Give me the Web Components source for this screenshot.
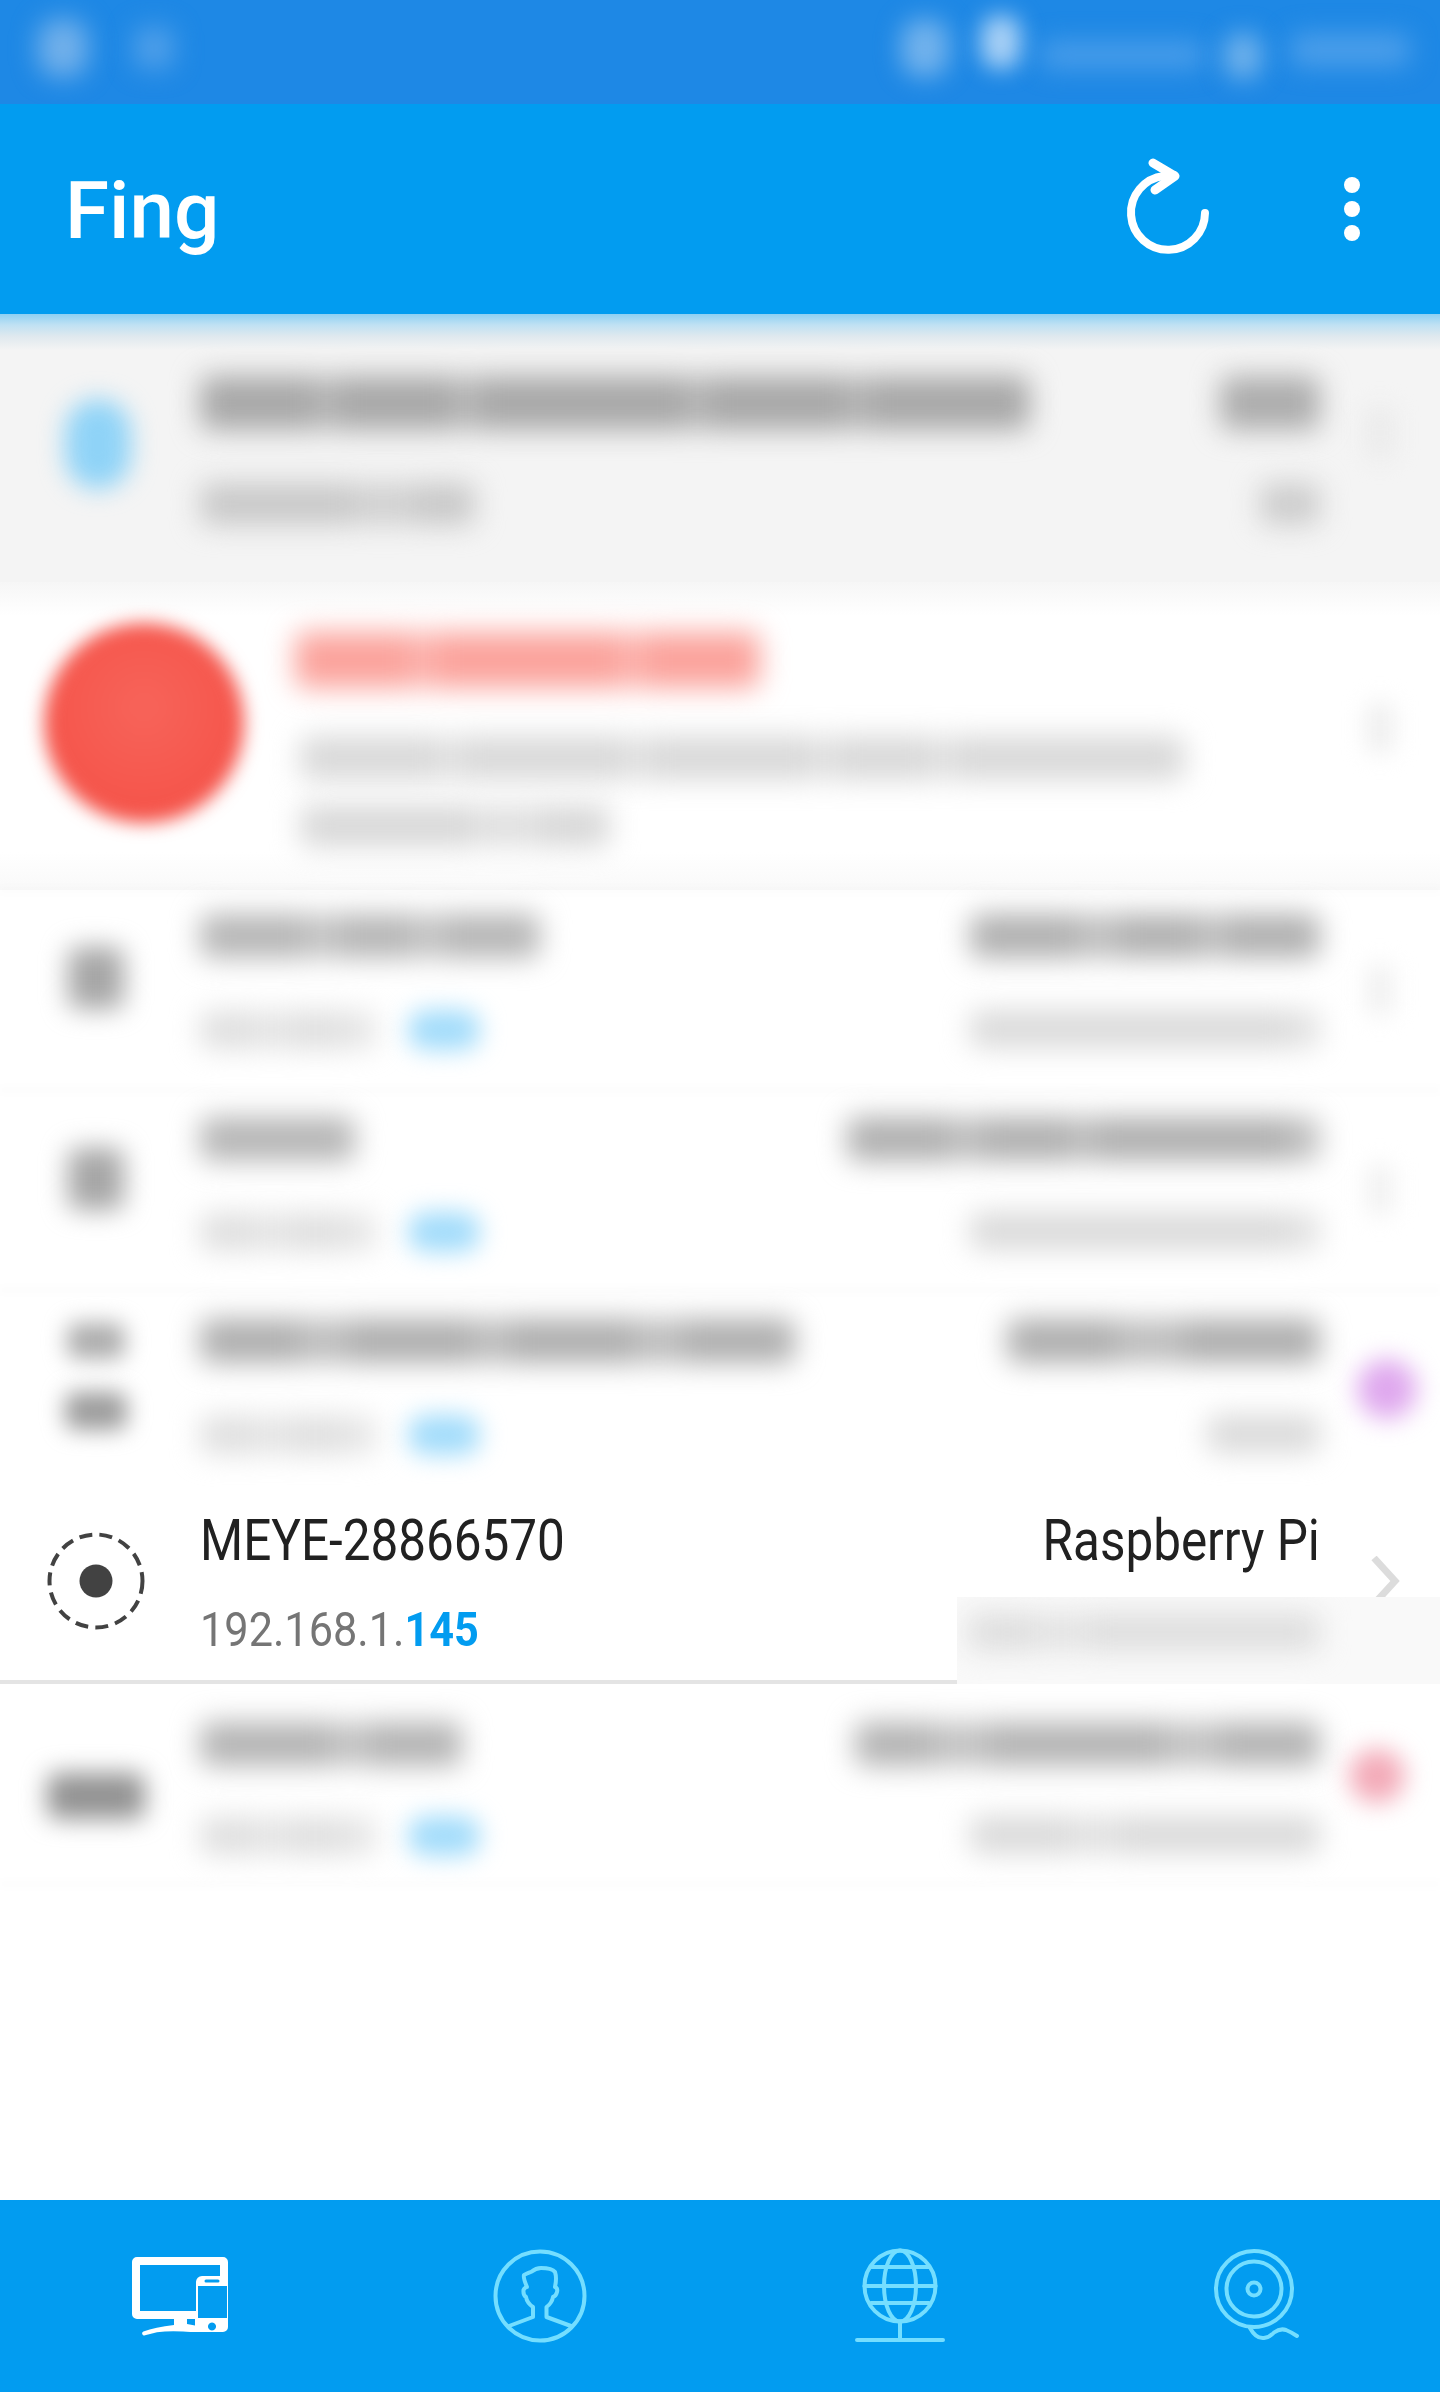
<!DOCTYPE html>
<html><head><meta charset="utf-8"><title>Fing</title>
<style>
html,body{margin:0;padding:0;background:#fff}
body{width:1440px;height:2392px;overflow:hidden;font-family:Roboto,"Liberation Sans",sans-serif}
fing-app{display:flex}
</style></head><body>
<fing-app></fing-app>
<script>
class BlurBar extends HTMLElement{
  connectedCallback(){
    const a=(n,d)=>this.getAttribute(n)??d;
    const segs=a('segs','100').split(',').map(Number);
    const c=a('c','#ccc'),h=a('h','40'),b=a('b','14');
    const s=this.attachShadow({mode:'open'});
    s.innerHTML=`<style>:host{display:block;width:${a('w','100')}px;height:${h}px}
      .w{display:flex;width:100%;height:100%;overflow:hidden;filter:blur(${b}px);border-radius:${a('r','10')}px}
      i{display:block;height:100%;background:${c}}</style>
      <div class="w">${segs.map(v=>`<i style="flex:${Math.abs(v)} 0 0;${v<0?'opacity:.8':''}"></i>`).join('')}</div>`;
  }
}
customElements.define('blur-bar',BlurBar);

class StatusBar extends HTMLElement{
  constructor(){super();this.attachShadow({mode:'open'}).innerHTML=`<style>
    :host{display:flex;height:104px;background:#1e88e5;align-items:center;box-sizing:border-box;padding:0 30px 8px 38px;overflow:hidden;flex:none}
    .a{display:flex;align-items:center;gap:46px}.sp{flex:1}
    .b{display:flex;align-items:center}
  </style>
  <div class="a"><blur-bar w="50" h="58" c="#72b0ea" b="13" r="20"></blur-bar><blur-bar w="40" h="42" c="#4f9fe9" b="13"></blur-bar></div>
  <div class="sp"></div>
  <div class="b" style="margin-right:0">
    <blur-bar w="48" h="58" c="#72b2ec" b="12" r="20" style="margin-right:-14px;margin-left:-14px"></blur-bar>
    <blur-bar w="40" h="54" c="#a8d0f5" b="11" r="18" style="margin-left:46px;margin-top:-12px"></blur-bar>
    <blur-bar w="165" h="26" c="#4b9eea" b="13" style="margin-left:19px;margin-top:14px"></blur-bar>
    <blur-bar w="38" h="46" c="#6fb1eb" b="12" r="16" style="margin-left:19px;margin-top:16px"></blur-bar>
    <blur-bar w="120" h="32" c="#4d9fea" b="13" style="margin-left:28px;margin-top:4px"></blur-bar>
  </div>`;}
}
customElements.define('status-bar',StatusBar);

class TopBar extends HTMLElement{
  constructor(){super();this.attachShadow({mode:'open'}).innerHTML=`<style>
    :host{display:flex;height:210px;background:#029cf0;align-items:center;color:#fff;position:relative;z-index:1;flex:none}
    h1{margin:0 0 0 65px;font:500 80px/1 Roboto,sans-serif;flex:1;position:relative;top:2px}
    svg{display:block}
    .shadow{position:absolute;left:0;right:0;top:100%;height:36px;background:linear-gradient(#8ed0f3,#bfe1f3 30%,rgba(222,232,238,.95) 62%,rgba(244,244,244,0))}
  </style>
  <h1>Fing</h1>
  <svg width="100" height="100" viewBox="0 0 100 100" style="margin-right:130px;position:relative;top:-1px">
    <path d="M91 55 A37 37 0 1 1 50 18 L60 17" fill="none" stroke="#fff" stroke-width="8" stroke-linecap="round"/>
    <path d="M39 5 L61 18 L41 32" fill="none" stroke="#fff" stroke-width="9" stroke-linecap="round" stroke-linejoin="round"/>
  </svg>
  <svg width="16" height="64" viewBox="0 0 16 64" style="margin-right:80px;position:relative;top:0">
    <circle cx="8" cy="8" r="8" fill="#fff"/><circle cx="8" cy="32" r="8" fill="#fff"/><circle cx="8" cy="56" r="8" fill="#fff"/>
  </svg>
  <div class="shadow"></div>`;}
}
customElements.define('top-bar',TopBar);

class DeviceRow extends HTMLElement{
  connectedCallback(){
    const h=this.getAttribute('height'),top=this.getAttribute('top')||0,gap=this.getAttribute('gap')||0,bg=this.getAttribute('bg')||'transparent';
    this.attachShadow({mode:'open'}).innerHTML=`<style>
    :host{display:grid;grid-template-columns:200px 1fr 120px;height:${h}px;background:${bg};position:relative;flex:none;box-sizing:border-box}
    .ic{display:flex;align-items:center;justify-content:center;flex-direction:column;gap:${this.getAttribute('icgap')||30}px;padding-right:8px;padding-bottom:${this.getAttribute('icb')||0}px;padding-top:${this.getAttribute('ict')||0}px}
    .mid{display:grid;grid-template-columns:1fr auto;grid-template-rows:auto auto;align-content:start;row-gap:${gap}px;padding-top:${top}px}
    .e{display:flex;align-items:center;justify-content:center}
    ::slotted([slot=tr]),::slotted([slot=br]){justify-self:end}
    </style>
    <div class="ic"><slot name="icon"></slot></div>
    <div class="mid"><slot name="tl"></slot><slot name="tr"></slot><slot name="bl"></slot><slot name="br"></slot></div>
    <div class="e"><slot name="end"></slot></div>`;
  }
}
customElements.define('device-row',DeviceRow);

class IpLine extends HTMLElement{
  constructor(){super();this.attachShadow({mode:'open'}).innerHTML=`<style>
    :host{display:flex;gap:32px;align-items:center}
  </style><blur-bar w="176" h="38" c="#dfdfdf" segs="50,-30,50,-30"></blur-bar><blur-bar w="72" h="40" c="#a2dcfb" r="18" b="12"></blur-bar>`;}
}
customElements.define('ip-line',IpLine);

class AlertRow extends HTMLElement{
  constructor(){super();this.attachShadow({mode:'open'}).innerHTML=`<style>
    :host{display:grid;grid-template-columns:295px 1fr 120px;height:308px;flex:none;background:linear-gradient(#f6f6f6,#fff 34px,#fff 270px,#f9f9f9)}
    .c{display:flex;align-items:center;justify-content:center;padding-bottom:27px}
    .d{width:200px;height:200px;border-radius:50%;background:radial-gradient(circle at 50% 42%,#f7645a,#f5544a 70%);filter:blur(9px);margin-left:-8px}
    .t{display:flex;flex-direction:column;padding-top:50px}
    .e{display:flex;align-items:center;justify-content:center;padding-bottom:16px}
  </style>
  <div class="c"><div class="d"></div></div>
  <div class="t">
    <blur-bar w="465" h="56" c="#fba39c" segs="100,-20,100,60,-20,100"></blur-bar>
    <blur-bar w="885" h="44" c="#d9d9d9" segs="60,-12,70,-12,70,-12,40,-12,100" style="margin-top:48px;margin-left:5px"></blur-bar>
    <blur-bar w="310" h="42" c="#d8d8d8" segs="100,-40,40" style="margin-top:25px;margin-left:5px"></blur-bar>
  </div>
  <div class="e"><blur-bar w="28" h="52" c="#efefef" b="11"></blur-bar></div>`;}
}
customElements.define('alert-row',AlertRow);

class BottomNav extends HTMLElement{
  constructor(){super();this.attachShadow({mode:'open'}).innerHTML=`<style>
    :host{display:grid;grid-template-columns:repeat(4,360px);height:192px;background:#029cf0;flex:none;position:relative;margin-top:auto}
    div{display:flex;align-items:flex-start;justify-content:center}
    svg{display:block;margin-top:50px;overflow:visible}
    .o{fill:none;stroke:#74deff;stroke-width:4;stroke-linecap:round;stroke-linejoin:round}
  </style>
  <div>
    <svg width="100" height="82" viewBox="0 0 100 82" style="margin-left:2px;margin-top:56px">
      <path fill="#fff" fill-rule="evenodd" d="M6 1H92a5 5 0 0 1 5 5V71a5 5 0 0 1-5 5H70q-12 0-18-.5-14-1-26 .8l-12 3a2 2 0 0 1-1.600-3.700Q24 71 43 69V63H6a5 5 0 0 1-5-5V6a5 5 0 0 1 5-5ZM9 9V55H65V26a6 6 0 0 1 6-6H89V9ZM67 30V62H96V30ZM75 23.500a1 1 0 0 0 0 3H87a1 1 0 0 0 0-3ZM81 66.500a4 4 0 1 0 .01 0ZM56 63V68L64 69.500V63Z"/>
    </svg>
  </div>
  <div>
    <svg width="92" height="92" viewBox="0 0 92 92">
      <circle class="o" cx="46" cy="46" r="44.500"/>
      <path class="o" d="M15 76 39 67V57Q33 53 32 47 29 45 29.500 40 31 37 33 37 29 28 30 25 36 22 37 22 42 18 47 18 58 18 61 22 63 28 61 37 64 38 63 42 62 46 59 47 58 53 52.500 57V67L77 76"/>
    </svg>
  </div>
  <div>
    <svg width="92" height="92" viewBox="0 0 92 92">
      <circle class="o" cx="46" cy="36" r="35.500"/>
      <ellipse class="o" cx="46" cy="36" rx="16" ry="35.500"/>
      <path class="o" d="M10.500 36H81.500M17 17H75M17 53H75M46 71.500V90M3 90H89"/>
    </svg>
  </div>
  <div>
    <svg width="92" height="92" viewBox="0 0 92 92">
      <circle class="o" cx="40" cy="39" r="38"/><circle class="o" cx="40" cy="39" r="27.500"/><circle class="o" cx="40" cy="39" r="6.500"/>
      <path class="o" d="M36 78Q42 89 50 88 56 87 60 82.500 66 78 72 80 77 82 83 86"/>
    </svg>
  </div>`;}
}
customElements.define('bottom-nav',BottomNav);

class SelectedRow extends HTMLElement{
  constructor(){super();this.attachShadow({mode:'open'}).innerHTML=`<style>
    :host{display:grid;grid-template-columns:200px 1fr auto 120px;height:197px;background:#fff;position:relative;flex:none;box-sizing:border-box;color:#212121}
    .ic{display:flex;align-items:center;justify-content:center;padding-right:8px;padding-bottom:9px}
    .n,.r{font:400 57px/68px Roboto,sans-serif;display:inline-block;white-space:nowrap;margin-top:20px}
    .n{transform:scaleX(.867);transform-origin:0 0}
    .r{transform:scaleX(.867);transform-origin:100% 0}
    .ip{font:400 49px/60px Roboto,sans-serif;color:#757575;margin-top:25px;white-space:nowrap;transform:scaleX(.883);transform-origin:0 0;width:max-content}
    .ip b{font-weight:700;color:#029cf0}
    .ch{display:flex;justify-content:flex-end;padding:69px 40px 0 0;height:41px;overflow:hidden}
    .line{position:absolute;left:0;right:0;bottom:0;height:4px;background:#e4e4e4}
    .patch{position:absolute;left:957px;right:0;top:110px;bottom:0;background:#f9f9f9;padding:16px 0 0 11px;box-sizing:border-box;overflow:hidden}
  </style>
  <div class="ic"><svg width="100" height="100" viewBox="0 0 100 100">
    <circle cx="50" cy="50" r="46.500" fill="none" stroke="#424242" stroke-width="4" stroke-dasharray="13 7.200"/>
    <circle cx="50" cy="50" r="16.500" fill="#424242"/></svg></div>
  <div><div class="n">MEYE-28866570</div><div class="ip">192.168.1.<b>145</b></div></div>
  <div><div class="r">Raspberry Pi</div></div>
  <div class="ch"><svg width="30" height="50" viewBox="0 0 30 50" style="flex:none"><path d="M4 2 25 25 4 48" fill="none" stroke="#dcdcdc" stroke-width="7"/></svg></div>
  <div class="line"></div>
  <div class="patch"><blur-bar w="352" h="38" c="#dedede" segs="60,-50,70,70,70"></blur-bar></div>`;}
}
customElements.define('selected-row',SelectedRow);

class FingApp extends HTMLElement{
  constructor(){super();this.attachShadow({mode:'open'}).innerHTML=`<style>
    :host{display:flex;flex-direction:column;width:1440px;height:2392px;background:#fff;overflow:hidden}
    .sep{height:0;box-shadow:0 0 10px 3px rgba(0,0,0,.02);flex:none}
    .fill{flex:1}
  </style>
  <status-bar></status-bar>
  <top-bar></top-bar>
  <device-row height="268" top="62" gap="53" icb="8" bg="#f4f4f4">
    <blur-bar slot="icon" w="66" h="90" c="#8fd3f7" r="34" b="12" style="margin-left:4px"></blur-bar>
    <blur-bar slot="tl" w="830" h="54" c="#a8a8a8" segs="50,-10,50,-12,90,-10,60,-10,70"></blur-bar>
    <blur-bar slot="tr" w="100" h="54" c="#adadad"></blur-bar>
    <blur-bar slot="bl" w="275" h="42" c="#c8c8c8" segs="100,-40,40"></blur-bar>
    <blur-bar slot="br" w="60" h="42" c="#cccccc"></blur-bar>
    <blur-bar slot="end" w="28" h="52" c="#ebebeb" b="11" style="margin-bottom:30px"></blur-bar>
  </device-row>
  <alert-row></alert-row>
  <div class="sep"></div>
  <device-row height="200" top="24" gap="52" icb="25">
    <blur-bar slot="icon" w="56" h="62" c="#a6a6a6" b="13"></blur-bar>
    <blur-bar slot="tl" w="340" h="44" c="#b6b6b6" segs="100,-30,70,-30,90"></blur-bar>
    <blur-bar slot="tr" w="350" h="44" c="#b0b0b0" segs="80,-30,60,-20,70"></blur-bar>
    <ip-line slot="bl"></ip-line>
    <blur-bar slot="br" w="350" h="38" c="#dadada" segs="100,100,90,-30"></blur-bar>
    <blur-bar slot="end" w="28" h="52" c="#f1f1f1" b="11"></blur-bar>
  </device-row>
  <div class="sep"></div>
  <device-row height="200" top="27" gap="51" icb="22">
    <blur-bar slot="icon" w="56" h="62" c="#a6a6a6" b="13"></blur-bar>
    <blur-bar slot="tl" w="155" h="44" c="#b6b6b6"></blur-bar>
    <blur-bar slot="tr" w="473" h="44" c="#b0b0b0" segs="100,-30,90,-20,100,90,-30"></blur-bar>
    <ip-line slot="bl"></ip-line>
    <blur-bar slot="br" w="350" h="38" c="#dadada" segs="100,100,90,-30"></blur-bar>
    <blur-bar slot="end" w="28" h="52" c="#f2f2f2" b="11"></blur-bar>
  </device-row>
  <div class="sep"></div>
  <device-row height="197" top="29" gap="52" icb="24" icgap="33">
    <blur-bar slot="icon" w="58" h="36" c="#acacac" b="11"></blur-bar>
    <blur-bar slot="icon" w="62" h="38" c="#9c9c9c" b="11"></blur-bar>
    <blur-bar slot="tl" w="595" h="44" c="#aeaeae" segs="80,-40,100,-30,100,-40,90"></blur-bar>
    <blur-bar slot="tr" w="313" h="44" c="#aeaeae" segs="80,-50,100"></blur-bar>
    <ip-line slot="bl"></ip-line>
    <blur-bar slot="br" w="113" h="38" c="#dadada"></blur-bar>
    <blur-bar slot="end" w="60" h="60" c="#dfa8ee" r="30" b="12" style="margin-left:14px"></blur-bar>
  </device-row>
  <selected-row></selected-row>
  <device-row height="200" top="38" gap="50" ict="24">
    <blur-bar slot="icon" w="98" h="46" c="#929292" b="12"></blur-bar>
    <blur-bar slot="tl" w="262" h="44" c="#b4b4b4" segs="100,-30,70"></blur-bar>
    <blur-bar slot="tr" w="465" h="44" c="#b4b4b4" segs="70,-50,60,100,-50,90"></blur-bar>
    <ip-line slot="bl"></ip-line>
    <blur-bar slot="br" w="350" h="38" c="#dadada" segs="100,-50,100,100"></blur-bar>
    <blur-bar slot="end" w="56" h="54" c="#f3aab8" r="27" b="12" style="margin-right:6px;margin-bottom:16px"></blur-bar>
  </device-row>
  <div class="sep"></div>
  <div class="fill"></div>
  <bottom-nav></bottom-nav>`;}
}
customElements.define('fing-app',FingApp);
</script>
</body></html>
